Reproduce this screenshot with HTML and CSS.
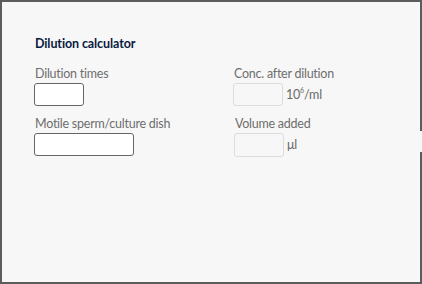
FILE: index.html
```html
<!DOCTYPE html>
<html>
<head>
<meta charset="utf-8">
<link rel="stylesheet" href="styles.css">
</head>
<body>
<div class="panel">
  <div class="notch"></div>
  <div class="title">Dilution calculator</div>
  <div class="grid">
    <div class="field">
      <label class="label">Dilution times</label>
      <div class="row"><input class="input small" type="text"></div>
    </div>
    <div class="field">
      <label class="label">Conc. after dilution</label>
      <div class="row"><input class="input small disabled" type="text" disabled><span class="unit">10<sup>6</sup>/ml</span></div>
    </div>
    <div class="field">
      <label class="label">Motile sperm/culture dish</label>
      <div class="row"><input class="input wide" type="text"></div>
    </div>
    <div class="field">
      <label class="label label-shift">Volume added</label>
      <div class="row shift"><input class="input small disabled tall" type="text" disabled><span class="unit">μl</span></div>
    </div>
  </div>
</div>
</body>
</html>
```
FILE: styles.css
```css
html, body {
  margin: 0;
  padding: 0;
  background: #f7f7f7;
}
.panel {
  position: relative;
  box-sizing: border-box;
  width: 422px;
  height: 284px;
  border: 2px solid #5c5c5c;
  background: #f7f7f7;
  padding: 34px 0 0 32px;
  font-family: Lato, "Noto Sans", sans-serif;
}
.notch {
  position: absolute;
  right: -2px;
  top: 129px;
  width: 2px;
  height: 21px;
  background: #f7f7f7;
}
.title {
  font-weight: bold;
  font-size: 12.5px;
  line-height: 15px;
  letter-spacing: -0.1px;
  color: #0a1a40;
  padding-left: 1px;
}
.grid {
  display: grid;
  grid-template-columns: 199px 199px;
  row-gap: 10px;
  margin-top: 15px;
}
.field {
  display: flex;
  flex-direction: column;
  gap: 1px;
}
.label {
  font-size: 12.5px;
  line-height: 16px;
  letter-spacing: -0.25px;
  color: #6e6e6e;
  padding-left: 1px;
}
.label-shift {
  padding-left: 2px;
}
.row {
  display: flex;
  align-items: center;
  gap: 3px;
}
.shift {
  padding-left: 1px;
}
.input {
  box-sizing: border-box;
  height: 23px;
  margin: 0;
  border: 1px solid #666;
  border-radius: 3px;
  background: #fff;
  padding: 0 4px;
  outline: none;
}
.small {
  width: 50px;
}
.wide {
  width: 100px;
}
.disabled {
  border-color: #dcdcdc;
  background: #f7f7f7;
}
.tall {
  height: 24px;
}
.unit {
  font-size: 12.5px;
  line-height: 16px;
  letter-spacing: -0.2px;
  color: #6a6a6a;
}
.unit sup {
  font-size: 7px;
  vertical-align: 6px;
  line-height: 0;
}
```
